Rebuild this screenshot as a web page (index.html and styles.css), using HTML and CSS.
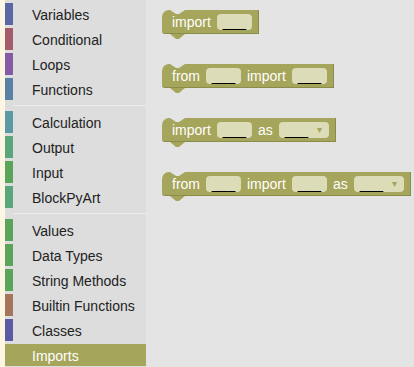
FILE: index.html
```html
<!DOCTYPE html>
<html lang="en">
<head>
  <meta charset="UTF-8">
  <meta name="viewport" content="width=device-width, initial-scale=1.0">
  <title>BlockPy Imports</title>
  <link rel="stylesheet" href="styles.css">
</head>
<body>
  <div class="editor">
    <div class="gutter"></div>

    <div class="toolbox">
      <div class="cat" style="--cat: #5b67a5">Variables</div>
      <div class="cat" style="--cat: #a55b6b">Conditional</div>
      <div class="cat" style="--cat: #845ba5">Loops</div>
      <div class="cat" style="--cat: #5b80a5">Functions</div>
      <div class="sep"></div>
      <div class="cat" style="--cat: #5b9aa5">Calculation</div>
      <div class="cat" style="--cat: #5ba57a">Output</div>
      <div class="cat" style="--cat: #5ba55b">Input</div>
      <div class="cat" style="--cat: #5ba57a">BlockPyArt</div>
      <div class="sep"></div>
      <div class="cat" style="--cat: #5ba55b">Values</div>
      <div class="cat" style="--cat: #5ba55b">Data Types</div>
      <div class="cat" style="--cat: #5ba55b">String Methods</div>
      <div class="cat" style="--cat: #a5745b">Builtin Functions</div>
      <div class="cat" style="--cat: #5b5ba5">Classes</div>
      <div class="cat selected" style="--cat: #a5a55b">Imports</div>
    </div>

    <div class="workspace">
      <div class="block">
        <span>import</span>
        <span class="field">___</span>
      </div>
      <div class="block">
        <span>from</span>
        <span class="field">___</span>
        <span>import</span>
        <span class="field">___</span>
      </div>
      <div class="block">
        <span>import</span>
        <span class="field">___</span>
        <span>as</span>
        <span class="field dropdown">___<i class="arrow">&#9662;</i></span>
      </div>
      <div class="block">
        <span>from</span>
        <span class="field">___</span>
        <span>import</span>
        <span class="field">___</span>
        <span>as</span>
        <span class="field dropdown">___<i class="arrow">&#9662;</i></span>
      </div>
    </div>
  </div>
</body>
</html>
```

FILE: styles.css
```css
html, body {
  margin: 0;
  height: 100%;
}
body {
  font-family: "Liberation Sans", Arial, sans-serif;
  background: #e4e4e4;
  overflow: hidden;
}
.editor {
  display: flex;
  height: 100%;
}
.gutter {
  width: 5px;
  background: #fdf6e3;
}
.toolbox {
  width: 141px;
  background: #dddddd;
  padding-top: 3px;
}
.cat {
  height: 22px;
  line-height: 22px;
  padding-top: 1px;
  box-sizing: border-box;
  margin-bottom: 3px;
  padding-left: 19px;
  border-left: 8px solid var(--cat);
  font-size: 14px;
  color: #222;
}
.cat.selected {
  background: var(--cat);
  color: #fff;
}
.sep {
  height: 1px;
  margin: 5px 0 5px 8px;
  background: #ececec;
}
.workspace {
  flex: 1;
  display: flex;
  flex-direction: column;
  align-items: flex-start;
  gap: 30px;
  padding: 10px 0 0 16px;
}
.block {
  position: relative;
  display: flex;
  align-items: center;
  gap: 6px;
  height: 24px;
  box-sizing: border-box;
  padding: 0 6px 0 10px;
  background: #a5a55b;
  border-right: 1px solid #8c8c4a;
  border-bottom: 1px solid #8c8c4a;
  border-radius: 7px 0 0 3px;
  color: #fff;
  font-size: 14px;
}
/* previous-connection notch on top */
.block::before {
  content: "";
  position: absolute;
  left: 8px;
  top: 0;
  width: 15px;
  height: 4px;
  background: #e4e4e4;
  clip-path: polygon(0 0, 100% 0, 60% 100%, 40% 100%);
}
/* next-connection tab below */
.block::after {
  content: "";
  position: absolute;
  left: 8px;
  bottom: -6px;
  width: 15px;
  height: 5px;
  background: #a5a55b;
  clip-path: polygon(0 0, 100% 0, 60% 100%, 40% 100%);
}
.field {
  position: relative;
  width: 35px;
  height: 16px;
  line-height: 16px;
  box-sizing: border-box;
  background: #dcdcb9;
  border-radius: 4px;
  color: #000;
  font-size: 14px;
  text-align: center;
}
.field.dropdown {
  width: 50px;
  text-align: left;
  padding-left: 6px;
}
.arrow {
  position: absolute;
  right: 7px;
  top: 0;
  font-style: normal;
  font-size: 10px;
  color: #a5a55b;
}
```
